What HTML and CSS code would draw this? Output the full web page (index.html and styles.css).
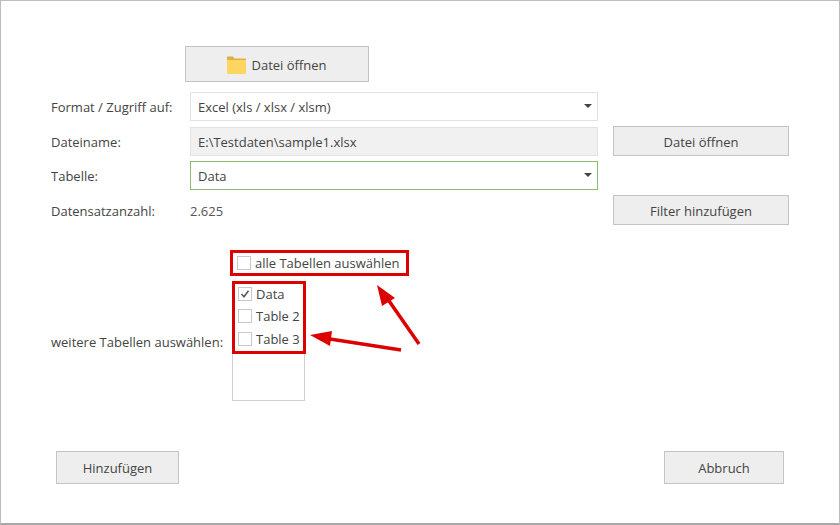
FILE: index.html
```html
<!DOCTYPE html>
<html lang="de">
  <head>
    <meta charset="UTF-8" />
    <title>Datei öffnen</title>
    <link rel="stylesheet" href="styles.css">
  </head>

  <body>
    <div class="window">
      <button class="btn open-button">
        <svg class="folder-icon" width="19" height="18" viewBox="0 0 19 18">
          <path d="M0 1 Q0 .5 .5 .5 H6 L7.5 2.5 H19 V5 H0 Z" fill="#e0b040" />
          <path d="M0 4 H19 V17 Q19 18 18 18 H1 Q0 18 0 17 Z" fill="#fdd560" />
        </svg>
        Datei öffnen
      </button>

      <div class="form-grid">
        <div class="label">Format / Zugriff auf:</div>
        <div class="field">Excel (xls / xlsx / xlsm)<span class="caret"></span></div>
        <div></div>

        <div class="label">Dateiname:</div>
        <div class="field field-readonly">E:\Testdaten\sample1.xlsx</div>
        <button class="btn">Datei öffnen</button>

        <div class="label">Tabelle:</div>
        <div class="field field-valid">Data<span class="caret"></span></div>
        <div></div>

        <div class="label">Datensatzanzahl:</div>
        <div class="value">2.625</div>
        <button class="btn">Filter hinzufügen</button>
      </div>

      <div class="tables">
        <div class="label tables-label">weitere Tabellen auswählen:</div>
        <div class="tables-right">
          <label class="select-all marked">
            <span class="check"></span>alle Tabellen auswählen
          </label>
          <div class="table-list">
            <div class="table-items marked">
              <label class="table-item">
                <span class="check">
                  <svg width="10" height="10" viewBox="0 0 10 10"><path d="M1.5 5 L4 7.8 L8.5 1.8" fill="none" stroke="#555" stroke-width="1.5" /></svg>
                </span>Data
              </label>
              <label class="table-item"><span class="check"></span>Table 2</label>
              <label class="table-item"><span class="check"></span>Table 3</label>
            </div>
          </div>
        </div>
      </div>

      <div class="actions">
        <button class="btn action-button">Hinzufügen</button>
        <button class="btn action-button">Abbruch</button>
      </div>

      <!-- annotation arrows drawn over the dialog -->
      <svg class="arrows" width="840" height="525" viewBox="0 0 840 525">
        <path d="M419 344 L387 298" stroke="#dc0000" stroke-width="3.5" fill="none" />
        <path d="M377 285 L395 298 L382 306 Z" fill="#dc0000" />
        <path d="M401 350 L330 339" stroke="#dc0000" stroke-width="3.5" fill="none" />
        <path d="M310 335 L332 331 L330 346 Z" fill="#dc0000" />
      </svg>
    </div>
  </body>
</html>
```

FILE: styles.css
```css
/* General layout */
body {
  margin: 0;
  font-family: "Open Sans", "Noto Sans", sans-serif;
  font-size: 13px;
  color: #444;
  background: #fff;
}

.window {
  position: relative;
  width: 840px;
  height: 525px;
  box-sizing: border-box;
  border: 1px solid #bdbdbd;
  border-bottom: 2px solid #a8a8a8;
  padding-top: 45px;
  overflow: hidden;
}

.btn {
  display: flex;
  align-items: center;
  justify-content: center;
  box-sizing: border-box;
  font: inherit;
  color: #444;
  background: #eeeeee;
  border: 1px solid #c4c4c4;
  padding: 1px 0 0;
}

.open-button {
  width: 184px;
  height: 36px;
  margin-left: 184px;
  margin-bottom: 10px;
  gap: 5px;
}

/* Form rows */
.form-grid {
  display: grid;
  grid-template-columns: 124px 408px 176px;
  grid-auto-rows: 29px;
  column-gap: 15px;
  row-gap: 5.5px;
  margin-left: 50px;
  align-items: center;
}

.form-grid .btn {
  height: 30px;
}

.label {
  padding-top: 1px;
  color: #444;
  white-space: nowrap;
}

.field {
  position: relative;
  box-sizing: border-box;
  height: 29px;
  line-height: 29px;
  padding-left: 7px;
  background: #fff;
  border: 1px solid #e2e2e2;
}

.field-readonly {
  background: #f1f1f1;
}

.field-valid {
  border-color: #8bbd6c;
}

.caret {
  position: absolute;
  right: 5px;
  top: 11px;
  border-top: 4px solid #444;
  border-left: 4px solid transparent;
  border-right: 4px solid transparent;
}

.value {
  padding-top: 1px;
  color: #555;
}

/* Table selection */
.tables {
  display: flex;
  margin-top: 25px;
  margin-left: 50px;
  height: 152px;
}

.tables-label {
  width: 181px;
  margin-top: 82px;
}

.tables-right {
  display: flex;
  flex-direction: column;
  gap: 5px;
}

.marked {
  box-sizing: border-box;
  border: 3px solid #dc0000;
}

.select-all {
  display: flex;
  align-items: center;
  box-sizing: border-box;
  width: 179px;
  height: 26px;
  margin-left: -2px;
  padding-left: 4px;
  gap: 4px;
}

.table-list {
  box-sizing: border-box;
  width: 73px;
  height: 120px;
  border: 1px solid #d0d0d0;
  border-top: none;
}

.table-items {
  box-sizing: border-box;
  width: 74px;
  height: 73px;
  margin-left: -1px;
  padding-left: 3px;
  display: flex;
  flex-direction: column;
  gap: 2.5px;
}

.table-item {
  display: flex;
  align-items: center;
  height: 20px;
  gap: 4px;
  white-space: nowrap;
}

.check {
  display: flex;
  align-items: center;
  justify-content: center;
  box-sizing: border-box;
  width: 14px;
  height: 14px;
  background: #fff;
  border: 1px solid #c8c8c8;
}

/* Bottom buttons */
.actions {
  display: flex;
  justify-content: space-between;
  margin: 49px 55px 0 55px;
}

.action-button {
  width: 123px;
  height: 33px;
}

.action-button:last-child {
  width: 120px;
}

.arrows {
  position: absolute;
  left: -1px;
  top: -1px;
}
```
